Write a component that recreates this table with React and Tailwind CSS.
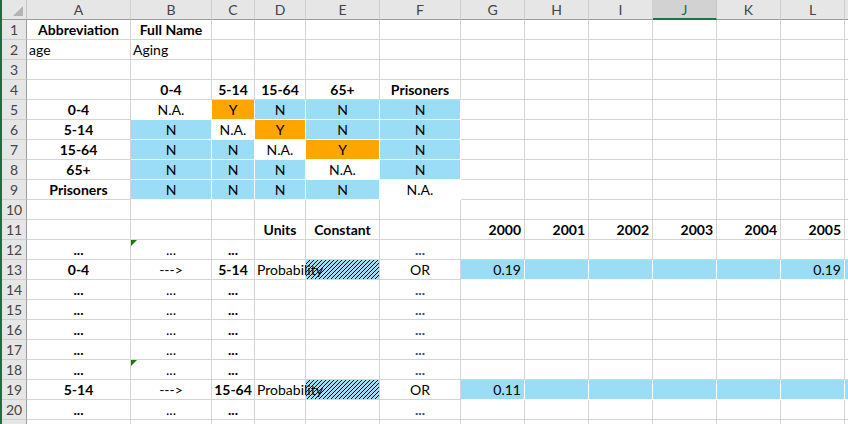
import React from "react";

const COLS = ["A", "B", "C", "D", "E", "F", "G", "H", "I", "J", "K", "L", "M"];
const BLUE = "bg-[#9bddf7]";
const ORANGE = "bg-[#ffa500]";

// cell specs: t text, b bold, a align, fill, hatch, dots colour
const cells = {
  A1: { t: "Abbreviation", b: true },
  B1: { t: "Full Name", b: true },
  A2: { t: "age", a: "left" },
  B2: { t: "Aging", a: "left" },
  B4: { t: "0-4", b: true },
  C4: { t: "5-14", b: true },
  D4: { t: "15-64", b: true },
  E4: { t: "65+", b: true },
  F4: { t: "Prisoners", b: true },
  D11: { t: "Units", b: true },
  E11: { t: "Constant", b: true },
};

const labels = ["0-4", "5-14", "15-64", "65+", "Prisoners"];
labels.forEach((l, i) => {
  const r = 5 + i;
  cells["A" + r] = { t: l, b: true };
  ["B", "C", "D", "E", "F"].forEach((c, j) => {
    if (i === j) cells[c + r] = { t: "N.A.", matrix: true };
    else if (j === i + 1 && i < 3) cells[c + r] = { t: "Y", fill: ORANGE, matrix: true };
    else cells[c + r] = { t: "N", fill: BLUE, matrix: true };
  });
});

["G", "H", "I", "J", "K", "L"].forEach((c, i) => {
  cells[c + "11"] = { t: String(2000 + i), b: true, a: "right" };
});

[12, 14, 15, 16, 17, 18, 20].forEach((r) => {
  cells["A" + r] = { t: "...", b: true };
  cells["B" + r] = { t: "...", tri: r === 12 || r === 18 };
  cells["C" + r] = { t: "...", b: true };
  cells["F" + r] = { t: "...", dots: true };
});

const flows = [
  { r: 13, from: "0-4", to: "5-14", v: "0.19", last: "0.19" },
  { r: 19, from: "5-14", to: "15-64", v: "0.11", last: "" },
];
flows.forEach(({ r, from, to, v, last }) => {
  cells["A" + r] = { t: from, b: true };
  cells["B" + r] = { t: "--->" };
  cells["C" + r] = { t: to, b: true };
  cells["D" + r] = { t: "Probability", a: "left", spill: true };
  cells["E" + r] = { hatch: true };
  cells["F" + r] = { t: "OR" };
  ["G", "H", "I", "J", "K", "L", "M"].forEach((c) => {
    cells[c + r] = { fill: BLUE, matrix: true, a: "right" };
  });
  cells["G" + r].t = v;
  cells["L" + r].t = last;
});

function Hatch() {
  return (
    <svg className="absolute inset-0" width="100%" height="100%">
      <defs>
        <pattern id="hatch" width="4" height="4" patternUnits="userSpaceOnUse">
          <rect width="4" height="4" fill="#9bddf7" />
          <rect x="3" y="0" width="1" height="1" fill="#000" />
          <rect x="2" y="1" width="1" height="1" fill="#000" />
          <rect x="1" y="2" width="1" height="1" fill="#000" />
          <rect x="0" y="3" width="1" height="1" fill="#000" />
        </pattern>
      </defs>
      <rect width="100%" height="100%" fill="url(#hatch)" shapeRendering="crispEdges" />
    </svg>
  );
}

function Cell({ spec }) {
  const s = spec || {};
  const align =
    s.a === "left" ? "justify-start pl-[2px]" : s.a === "right" ? "justify-end pr-[3px]" : "justify-center";
  const border = s.matrix ? "border-white" : "border-[#d4d4d4]";
  return (
    <div
      className={`relative flex items-center border-r border-b ${border} ${s.fill || "bg-white"} ${align} ${
        s.spill ? "overflow-visible" : "overflow-hidden"
      }`}
    >
      {s.hatch && <Hatch />}
      {s.tri && (
        <svg className="absolute left-0 top-0" width="6" height="6">
          <polygon points="0,0 6,0 0,6" fill="#107c10" />
        </svg>
      )}
      {s.t && (
        <span
          className={`relative z-10 whitespace-nowrap ${s.b || s.dots ? "font-bold" : "font-normal"} ${
            s.dots ? "text-[#1f4e79]" : "text-black"
          }`}
        >
          {s.t}
        </span>
      )}
    </div>
  );
}

export default function App() {
  const rows = Array.from({ length: 21 }, (_, i) => i + 1);
  return (
    <div className="h-[424px] w-[848px] overflow-hidden bg-white border-l-2 border-[#1e6e42] font-['Lato','Liberation_Sans',sans-serif] text-[14px] leading-none">
      <div className="grid grid-cols-[25px_104px_81px_43px_51px_74px_81px_64px_64px_64px_64px_64px_64px_4px] auto-rows-[20px]">
        {/* corner */}
        <div className="relative bg-[#e6e6e6] border-r border-b border-r-[#c6c6c6] border-b-[#9b9b9b]">
          <svg className="absolute right-[3px] bottom-[3px]" width="10" height="10">
            <polygon points="10,0 10,10 0,10" fill="#b4b4b4" />
          </svg>
        </div>
        {COLS.map((c) =>
          c === "J" ? (
            <div
              key={c}
              className="flex items-center justify-center bg-[#d2d2d2] border-r border-r-[#c6c6c6] border-b-2 border-b-[#217346] text-[#1e6e42] pt-[1px]"
            >
              {c}
            </div>
          ) : (
            <div
              key={c}
              className="flex items-center justify-center bg-[#e6e6e6] border-r border-b border-r-[#cfcfcf] border-b-[#9b9b9b] text-[#444444]"
            >
              {c === "M" ? "" : c}
            </div>
          )
        )}
        {rows.map((r) => (
          <React.Fragment key={r}>
            <div className="flex items-center justify-center bg-[#e6e6e6] border-r border-b border-r-[#9b9b9b] border-b-[#cfcfcf] text-[#444444]">
              {r < 21 ? r : ""}
            </div>
            {COLS.map((c) => (
              <Cell key={c} spec={cells[c + r]} />
            ))}
          </React.Fragment>
        ))}
      </div>
    </div>
  );
}
